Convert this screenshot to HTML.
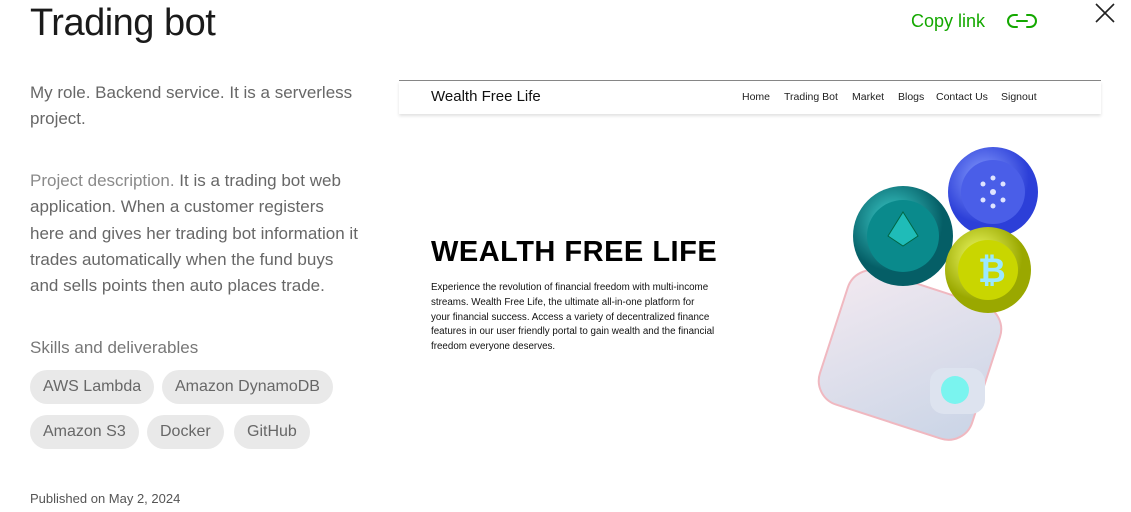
<!DOCTYPE html>
<html><head><meta charset="utf-8"><style>
*{margin:0;padding:0;box-sizing:border-box}
body{width:1131px;height:512px;background:#fff;font-family:"Liberation Sans",sans-serif;position:relative;overflow:hidden;color:#222}
.a{position:absolute}
h1{position:absolute;left:30px;top:2px;font-size:38px;font-weight:400;color:#1a1a1a;letter-spacing:-0.5px}
.p{position:absolute;left:30px;font-size:17px;line-height:26.3px;color:#676767;width:340px}
.p span{color:#8a8a8a}
.chip{position:absolute;height:34px;border-radius:17px;background:#e9e9e9;color:#676767;font-size:16px;line-height:34px;padding:0 13px}
</style></head><body>
<h1>Trading bot</h1>
<div class="a" style="left:911px;top:11px;font-size:18px;color:#14a800">Copy link</div>
<svg class="a" style="left:1006px;top:11px" width="32" height="20" viewBox="0 0 32 20"><path d="M11 4H8a6 6 0 0 0 0 12h3M21 4h3a6 6 0 0 1 0 12h-3M11 10h10" fill="none" stroke="#14a800" stroke-width="2" stroke-linecap="round"/></svg>
<svg class="a" style="left:1094px;top:2px" width="22" height="22"><path d="M2 2L20 20M20 2L2 20" stroke="#222" stroke-width="1.6"/></svg>
<div class="p" style="top:80px;width:345px">My role. Backend service. It is a serverless project.</div>
<div class="p" style="top:168px;width:330px"><span>Project description.</span> It is a trading bot web application. When a customer registers here and gives her trading bot information it trades automatically when the fund buys and sells points then auto places trade.</div>
<div class="p" style="top:335px;color:#777">Skills and deliverables</div>
<div class="chip" style="left:30px;top:370px">AWS Lambda</div>
<div class="chip" style="left:162px;top:370px">Amazon DynamoDB</div>
<div class="chip" style="left:30px;top:415px">Amazon S3</div>
<div class="chip" style="left:147px;top:415px">Docker</div>
<div class="chip" style="left:234px;top:415px">GitHub</div>
<div class="a" style="left:30px;top:491px;font-size:13px;color:#555">Published on May 2, 2024</div>
<div class="a" style="left:399px;top:80px;width:702px;height:1px;background:#888"></div>
<div class="a" style="left:399px;top:81px;width:702px;height:33px;box-shadow:0 2px 3px rgba(0,0,0,0.12)"></div>
<div class="a" style="left:431px;top:88px;font-size:15px;color:#111">Wealth Free Life</div>
<div class="a" style="left:742px;top:91px;font-size:10.5px;color:#222;white-space:nowrap">Home</div>
<div class="a" style="left:784px;top:91px;font-size:10.5px;color:#222;white-space:nowrap">Trading Bot</div>
<div class="a" style="left:852px;top:91px;font-size:10.5px;color:#222">Market</div>
<div class="a" style="left:898px;top:91px;font-size:10.5px;color:#222">Blogs</div>
<div class="a" style="left:936px;top:91px;font-size:10.5px;color:#222;white-space:nowrap">Contact Us</div>
<div class="a" style="left:1001px;top:91px;font-size:10.5px;color:#222">Signout</div>
<div class="a" style="left:431px;top:236px;font-size:29px;font-weight:700;color:#000;letter-spacing:0.5px">WEALTH FREE LIFE</div>
<div class="a" style="left:431px;top:281px;width:285px;font-size:9.8px;line-height:14.8px;color:#111">Experience the revolution of financial freedom with multi-income streams. Wealth Free Life, the ultimate all-in-one platform for your financial success. Access a variety of decentralized finance features in our user friendly portal to gain wealth and the financial freedom everyone deserves.</div>
<svg class="a" style="left:800px;top:140px" width="250" height="310">
<defs>
<radialGradient id="t" cx="40%" cy="35%"><stop offset="0" stop-color="#3fd3d0"/><stop offset="1" stop-color="#055e66"/></radialGradient>
<radialGradient id="b" cx="40%" cy="35%"><stop offset="0" stop-color="#8aa0ff"/><stop offset="1" stop-color="#2c3fd8"/></radialGradient>
<radialGradient id="y" cx="40%" cy="35%"><stop offset="0" stop-color="#f3ff6a"/><stop offset="1" stop-color="#9aa800"/></radialGradient>
<linearGradient id="w" x1="0" y1="0" x2="1" y2="1"><stop offset="0" stop-color="#f2e9f0"/><stop offset="1" stop-color="#c9d4e6"/></linearGradient>
</defs>
<rect x="30" y="145" width="160" height="140" rx="25" fill="url(#w)" transform="rotate(18 110 215)" stroke="#f0b8c0" stroke-width="2"/>
<circle cx="103" cy="96" r="50" fill="url(#t)"/><circle cx="103" cy="96" r="36" fill="#0a8a8c"/>
<path d="M103 72L118 96L103 106L88 96Z" fill="#1fbcb8" stroke="#064" stroke-width="1"/>
<circle cx="193" cy="52" r="45" fill="url(#b)"/><circle cx="193" cy="52" r="32" fill="#4a5ee8"/>
<g fill="#dfe4ff"><circle cx="193" cy="52" r="3"/><circle cx="183" cy="44" r="2.5"/><circle cx="203" cy="44" r="2.5"/><circle cx="183" cy="60" r="2.5"/><circle cx="203" cy="60" r="2.5"/><circle cx="193" cy="38" r="2.5"/><circle cx="193" cy="66" r="2.5"/></g>
<circle cx="188" cy="130" r="43" fill="url(#y)"/><circle cx="188" cy="130" r="30" fill="#c9d600"/>
<text x="178" y="142" font-size="34" font-weight="700" fill="#9be8ff" font-family="Liberation Sans">₿</text>
<rect x="130" y="228" width="55" height="46" rx="14" fill="#dde3ef"/>
<circle cx="155" cy="250" r="14" fill="#7af4ef"/>
</svg>
</body></html>
